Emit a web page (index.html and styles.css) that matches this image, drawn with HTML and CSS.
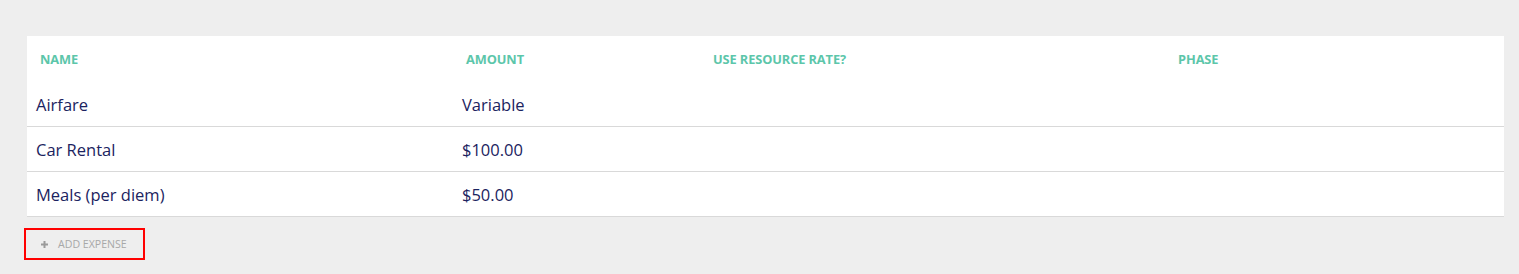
FILE: index.html
```html
<!DOCTYPE html>
<html lang="en">
<head>
<meta charset="utf-8">
<title>Expenses</title>
<link rel="stylesheet" href="styles.css">
</head>
<body>
  <section class="expenses">
    <table class="expense-table">
      <colgroup>
        <col class="col-name">
        <col class="col-amount">
        <col class="col-rate">
        <col class="col-phase">
      </colgroup>
      <thead>
        <tr>
          <th>Name</th>
          <th>Amount</th>
          <th>Use resource rate?</th>
          <th>Phase</th>
        </tr>
      </thead>
      <tbody>
        <tr>
          <td>Airfare</td>
          <td>Variable</td>
          <td></td>
          <td></td>
        </tr>
        <tr>
          <td>Car Rental</td>
          <td>$100.00</td>
          <td></td>
          <td></td>
        </tr>
        <tr>
          <td>Meals (per diem)</td>
          <td>$50.00</td>
          <td></td>
          <td></td>
        </tr>
      </tbody>
    </table>
    <button class="add-btn" type="button">
      <svg class="add-icon" width="7" height="7" viewBox="0 0 7 7" aria-hidden="true">
        <rect x="2.5" y="0" width="2" height="7" fill="currentColor"/>
        <rect x="0" y="2.5" width="7" height="2" fill="currentColor"/>
      </svg>
      <span>Add expense</span>
    </button>
  </section>
</body>
</html>
```

FILE: styles.css
```css
html, body {
  margin: 0;
  padding: 0;
  background: #eeeeee;
  font-family: "Open Sans", "Noto Sans", sans-serif;
}

.expenses {
  padding: 36px 15px 15px 27px;
}

.expense-table {
  width: 1477px;
  border-collapse: collapse;
  background: #ffffff;
  table-layout: fixed;
}

.col-name { width: 426px; }
.col-amount { width: 247px; }
.col-rate { width: 465px; }
.col-phase { width: auto; }

.expense-table th {
  text-align: left;
  font-size: 12.8px;
  font-weight: 700;
  text-transform: uppercase;
  color: #5cc6aa;
  height: 46px;
  padding: 0 0 0 13px;
  vertical-align: middle;
  letter-spacing: -0.1px;
}

.expense-table td {
  font-size: 16.5px;
  color: #1b2360;
  height: 44px;
  padding: 0 0 0 9px;
  border-bottom: 1px solid #d9d9d9;
  vertical-align: middle;
}

.add-btn {
  display: flex;
  align-items: center;
  gap: 10px;
  margin: 11px 0 0 -3px;
  width: 121px;
  height: 32px;
  padding: 0 0 0 15px;
  background: transparent;
  border: 2px solid #ff0000;
  box-sizing: border-box;
  font-family: "Open Sans", "Noto Sans", sans-serif;
  font-size: 10.6px;
  text-transform: uppercase;
  color: #a8a8a8;
  cursor: pointer;
}

.add-icon {
  color: #9a9a9a;
  flex: none;
}
```
